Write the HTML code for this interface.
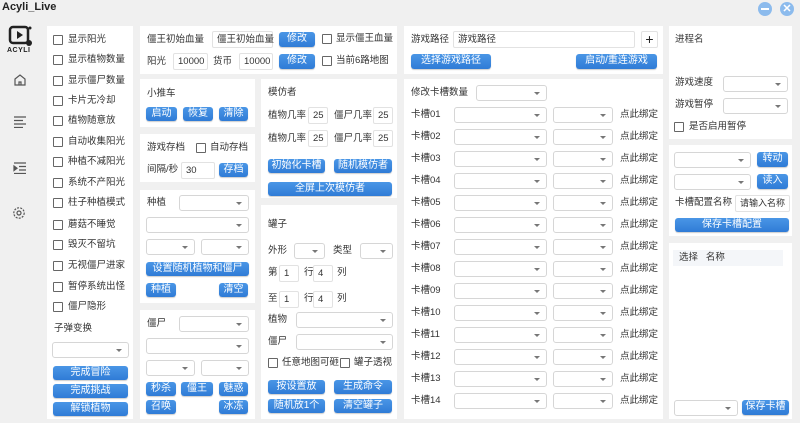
<!DOCTYPE html>
<html><head><meta charset="utf-8"><style>
*{box-sizing:border-box;margin:0;padding:0}
body{width:800px;height:423px;background:#f0f0f0;position:relative;overflow:hidden;font-family:"Liberation Sans","Noto Sans CJK SC",sans-serif;font-size:9.5px;color:#333}
div,span{position:absolute}
.p{background:#fff}
.t{white-space:nowrap;line-height:12px}
.b{background:linear-gradient(#4a96e6,#2f7bd6);color:#fff;border-radius:3px;text-align:center;font-size:10px;line-height:14px;height:14px;box-shadow:0 1px 1px rgba(0,0,0,.2)}
.s{background:#fff;border:1px solid #d6d6d6;border-radius:3px;height:16px}
.s:after{content:"";position:absolute;right:6px;top:6px;border-left:3px solid transparent;border-right:3px solid transparent;border-top:3px solid #777}
.i{background:#fff;border:1px solid #e2e2e2;border-radius:2px;height:17px;line-height:15px;padding-left:4px;white-space:nowrap}
.c{width:10px;height:10px;border:1px solid #666;background:#fff;border-radius:1px}
</style></head><body>
<div class="t" style="left:2px;top:1px;font-weight:bold;font-size:11px;color:#222">Acyli_Live</div>
<div style="left:758px;top:2px;width:14px;height:14px;border-radius:50%;background:#8cbbed"><div style="left:3px;top:6px;width:8px;height:2px;background:#fff"></div></div>
<div style="left:780px;top:2px;width:14px;height:14px;border-radius:50%;background:#8cbbed;color:#fff;font-size:11px;line-height:14px;text-align:center;font-weight:bold">✕</div>
<!-- sidebar -->
<svg style="position:absolute;left:8px;top:25px" width="26" height="22" viewBox="0 0 26 22"><rect x="2" y="2" width="18" height="16" rx="3" fill="none" stroke="#222" stroke-width="2.5"/><path d="M9 6 L15 10 L9 14Z" fill="#222"/><circle cx="21" cy="18" r="3" fill="#222"/><circle cx="22" cy="3" r="1.5" fill="#222"/></svg>
<div class="t" style="left:7px;top:45px;font-size:7px;font-weight:bold;color:#222;letter-spacing:.5px">ACYLI</div>
<svg style="position:absolute;left:13px;top:73px" width="14" height="14" viewBox="0 0 14 14" fill="none" stroke="#555" stroke-width="1.2"><path d="M2 6 L7 2 L12 6 V12 H2Z M6 12 V9 H8 V12"/></svg>
<svg style="position:absolute;left:13px;top:116px" width="14" height="12" viewBox="0 0 14 12" stroke="#555" stroke-width="1.2"><path d="M1 1H13M1 4.5H10M1 8H13M1 11.5H10"/></svg>
<svg style="position:absolute;left:13px;top:162px" width="14" height="12" viewBox="0 0 14 12" stroke="#555" stroke-width="1.2"><path d="M1 1H13M6 4.5H13M6 8H13M1 11.5H13"/><path d="M1 4 L4 6.2 L1 8.5Z" fill="#555"/></svg>
<svg style="position:absolute;left:12px;top:206px" width="14" height="14" viewBox="0 0 14 14" fill="none" stroke="#555" stroke-width="1.2"><circle cx="7" cy="7" r="2"/><circle cx="7" cy="7" r="5.2" stroke-dasharray="2 1.2"/></svg>

<!-- panel A -->
<div class="p" style="left:47px;top:26px;width:86px;height:393px"></div>
<div class="c" style="left:53px;top:35px"></div><div class="t" style="left:68px;top:34px">显示阳光</div>
<div class="c" style="left:53px;top:55px"></div><div class="t" style="left:68px;top:54px">显示植物数量</div>
<div class="c" style="left:53px;top:76px"></div><div class="t" style="left:68px;top:75px">显示僵尸数量</div>
<div class="c" style="left:53px;top:96px"></div><div class="t" style="left:68px;top:95px">卡片无冷却</div>
<div class="c" style="left:53px;top:116px"></div><div class="t" style="left:68px;top:115px">植物随意放</div>
<div class="c" style="left:53px;top:137px"></div><div class="t" style="left:68px;top:136px">自动收集阳光</div>
<div class="c" style="left:53px;top:157px"></div><div class="t" style="left:68px;top:156px">种植不减阳光</div>
<div class="c" style="left:53px;top:178px"></div><div class="t" style="left:68px;top:177px">系统不产阳光</div>
<div class="c" style="left:53px;top:198px"></div><div class="t" style="left:68px;top:197px">柱子种植模式</div>
<div class="c" style="left:53px;top:220px"></div><div class="t" style="left:68px;top:219px">蘑菇不睡觉</div>
<div class="c" style="left:53px;top:240px"></div><div class="t" style="left:68px;top:239px">毁灭不留坑</div>
<div class="c" style="left:53px;top:261px"></div><div class="t" style="left:68px;top:260px">无视僵尸进家</div>
<div class="c" style="left:53px;top:282px"></div><div class="t" style="left:68px;top:281px">暂停系统出怪</div>
<div class="c" style="left:53px;top:302px"></div><div class="t" style="left:68px;top:301px">僵尸隐形</div>
<div class="t" style="left:54px;top:323px">子弹变换</div>
<div class="s" style="left:52px;top:342px;width:77px"></div>
<div class="b" style="left:53px;top:366px;width:75px">完成冒险</div>
<div class="b" style="left:53px;top:384px;width:75px">完成挑战</div>
<div class="b" style="left:53px;top:402px;width:75px">解锁植物</div>

<!-- panel B -->
<div class="p" style="left:140px;top:26px;width:257px;height:48px"></div>
<div class="t" style="left:147px;top:34px">僵王初始血量</div>
<div class="i" style="left:212px;top:31px;width:61px">僵王初始血量</div>
<div class="b" style="left:279px;top:32px;width:36px;height:15px">修改</div>
<div class="c" style="left:322px;top:34px"></div><div class="t" style="left:336px;top:33px">显示僵王血量</div>
<div class="t" style="left:147px;top:56px">阳光</div>
<div class="i" style="left:173px;top:53px;width:35px">10000</div>
<div class="t" style="left:213px;top:56px">货币</div>
<div class="i" style="left:239px;top:53px;width:34px">10000</div>
<div class="b" style="left:279px;top:54px;width:36px;height:15px">修改</div>
<div class="c" style="left:322px;top:56px"></div><div class="t" style="left:336px;top:55px">当前6路地图</div>

<!-- C -->
<div class="p" style="left:140px;top:79px;width:115px;height:48px"></div>
<div class="t" style="left:147px;top:88px">小推车</div>
<div class="b" style="left:146px;top:107px;width:31px">启动</div>
<div class="b" style="left:183px;top:107px;width:30px">恢复</div>
<div class="b" style="left:219px;top:107px;width:29px">清除</div>
<!-- D -->
<div class="p" style="left:140px;top:134px;width:115px;height:48px"></div>
<div class="t" style="left:147px;top:142px">游戏存档</div>
<div class="c" style="left:196px;top:143px"></div><div class="t" style="left:210px;top:142px">自动存档</div>
<div class="t" style="left:147px;top:164px">间隔/秒</div>
<div class="i" style="left:181px;top:162px;width:34px">30</div>
<div class="b" style="left:219px;top:163px;width:29px">存档</div>
<!-- E -->
<div class="p" style="left:140px;top:190px;width:115px;height:113px"></div>
<div class="t" style="left:147px;top:197px">种植</div>
<div class="s" style="left:179px;top:195px;width:70px"></div>
<div class="s" style="left:146px;top:217px;width:103px"></div>
<div class="s" style="left:146px;top:239px;width:49px"></div>
<div class="s" style="left:201px;top:239px;width:48px"></div>
<div class="b" style="left:146px;top:262px;width:103px">设置随机植物和僵尸</div>
<div class="b" style="left:146px;top:283px;width:30px">种植</div>
<div class="b" style="left:219px;top:283px;width:29px">清空</div>
<!-- F -->
<div class="p" style="left:140px;top:310px;width:115px;height:109px"></div>
<div class="t" style="left:147px;top:318px">僵尸</div>
<div class="s" style="left:179px;top:316px;width:70px"></div>
<div class="s" style="left:146px;top:338px;width:103px"></div>
<div class="s" style="left:146px;top:360px;width:49px"></div>
<div class="s" style="left:201px;top:360px;width:48px"></div>
<div class="b" style="left:146px;top:382px;width:30px">秒杀</div>
<div class="b" style="left:181px;top:382px;width:32px">僵王</div>
<div class="b" style="left:219px;top:382px;width:29px">魅惑</div>
<div class="b" style="left:146px;top:400px;width:30px">召唤</div>
<div class="b" style="left:219px;top:400px;width:29px">冰冻</div>
<!-- G -->
<div class="p" style="left:261px;top:79px;width:136px;height:119px"></div>
<div class="t" style="left:268px;top:87px">模仿者</div>
<div class="t" style="left:268px;top:110px">植物几率</div>
<div class="i" style="left:308px;top:107px;width:20px">25</div>
<div class="t" style="left:334px;top:110px">僵尸几率</div>
<div class="i" style="left:373px;top:107px;width:20px">25</div>
<div class="t" style="left:268px;top:133px">植物几率</div>
<div class="i" style="left:308px;top:130px;width:20px">25</div>
<div class="t" style="left:334px;top:133px">僵尸几率</div>
<div class="i" style="left:373px;top:130px;width:20px">25</div>
<div class="b" style="left:268px;top:159px;width:57px">初始化卡槽</div>
<div class="b" style="left:334px;top:159px;width:58px">随机模仿者</div>
<div class="b" style="left:268px;top:182px;width:124px">全屏上次模仿者</div>
<!-- H -->
<div class="p" style="left:261px;top:205px;width:136px;height:214px"></div>
<div class="t" style="left:268px;top:219px">罐子</div>
<div class="t" style="left:268px;top:245px">外形</div>
<div class="s" style="left:294px;top:243px;width:31px"></div>
<div class="t" style="left:333px;top:245px">类型</div>
<div class="s" style="left:360px;top:243px;width:33px"></div>
<div class="t" style="left:268px;top:267px">第</div>
<div class="i" style="left:279px;top:265px;width:20px">1</div>
<div class="t" style="left:304px;top:267px">行</div>
<div class="i" style="left:313px;top:265px;width:20px">4</div>
<div class="t" style="left:337px;top:267px">列</div>
<div class="t" style="left:268px;top:293px">至</div>
<div class="i" style="left:279px;top:291px;width:20px">1</div>
<div class="t" style="left:304px;top:293px">行</div>
<div class="i" style="left:313px;top:291px;width:20px">4</div>
<div class="t" style="left:337px;top:293px">列</div>
<div class="t" style="left:268px;top:314px">植物</div>
<div class="s" style="left:296px;top:312px;width:97px"></div>
<div class="t" style="left:268px;top:336px">僵尸</div>
<div class="s" style="left:296px;top:334px;width:97px"></div>
<div class="c" style="left:268px;top:358px"></div><div class="t" style="left:282px;top:357px">任意地图可砸</div>
<div class="c" style="left:340px;top:358px"></div><div class="t" style="left:354px;top:357px">罐子透视</div>
<div class="b" style="left:268px;top:380px;width:57px">按设置放</div>
<div class="b" style="left:334px;top:380px;width:58px">生成命令</div>
<div class="b" style="left:268px;top:399px;width:57px">随机放1个</div>
<div class="b" style="left:334px;top:399px;width:58px">清空罐子</div>

<!-- I -->
<div class="p" style="left:404px;top:26px;width:259px;height:48px"></div>
<div class="t" style="left:411px;top:34px">游戏路径</div>
<div class="i" style="left:453px;top:31px;width:182px">游戏路径</div>
<div class="i" style="left:641px;top:31px;width:17px;padding:0;text-align:center;font-size:14px;line-height:14px;color:#222">+</div>
<div class="b" style="left:411px;top:54px;width:80px;height:15px">选择游戏路径</div>
<div class="b" style="left:576px;top:54px;width:81px;height:15px">启动/重连游戏</div>
<!-- J -->
<div class="p" style="left:404px;top:79px;width:259px;height:340px"></div>
<div class="t" style="left:411px;top:87px">修改卡槽数量</div>
<div class="s" style="left:476px;top:85px;width:71px"></div>
<div class="t" style="left:411px;top:109px">卡槽01</div><div class="s" style="left:454px;top:107px;width:93px"></div><div class="s" style="left:553px;top:107px;width:60px"></div><div class="t" style="left:620px;top:109px">点此绑定</div>
<div class="t" style="left:411px;top:131px">卡槽02</div><div class="s" style="left:454px;top:129px;width:93px"></div><div class="s" style="left:553px;top:129px;width:60px"></div><div class="t" style="left:620px;top:131px">点此绑定</div>
<div class="t" style="left:411px;top:153px">卡槽03</div><div class="s" style="left:454px;top:151px;width:93px"></div><div class="s" style="left:553px;top:151px;width:60px"></div><div class="t" style="left:620px;top:153px">点此绑定</div>
<div class="t" style="left:411px;top:175px">卡槽04</div><div class="s" style="left:454px;top:173px;width:93px"></div><div class="s" style="left:553px;top:173px;width:60px"></div><div class="t" style="left:620px;top:175px">点此绑定</div>
<div class="t" style="left:411px;top:197px">卡槽05</div><div class="s" style="left:454px;top:195px;width:93px"></div><div class="s" style="left:553px;top:195px;width:60px"></div><div class="t" style="left:620px;top:197px">点此绑定</div>
<div class="t" style="left:411px;top:219px">卡槽06</div><div class="s" style="left:454px;top:217px;width:93px"></div><div class="s" style="left:553px;top:217px;width:60px"></div><div class="t" style="left:620px;top:219px">点此绑定</div>
<div class="t" style="left:411px;top:241px">卡槽07</div><div class="s" style="left:454px;top:239px;width:93px"></div><div class="s" style="left:553px;top:239px;width:60px"></div><div class="t" style="left:620px;top:241px">点此绑定</div>
<div class="t" style="left:411px;top:263px">卡槽08</div><div class="s" style="left:454px;top:261px;width:93px"></div><div class="s" style="left:553px;top:261px;width:60px"></div><div class="t" style="left:620px;top:263px">点此绑定</div>
<div class="t" style="left:411px;top:285px">卡槽09</div><div class="s" style="left:454px;top:283px;width:93px"></div><div class="s" style="left:553px;top:283px;width:60px"></div><div class="t" style="left:620px;top:285px">点此绑定</div>
<div class="t" style="left:411px;top:307px">卡槽10</div><div class="s" style="left:454px;top:305px;width:93px"></div><div class="s" style="left:553px;top:305px;width:60px"></div><div class="t" style="left:620px;top:307px">点此绑定</div>
<div class="t" style="left:411px;top:329px">卡槽11</div><div class="s" style="left:454px;top:327px;width:93px"></div><div class="s" style="left:553px;top:327px;width:60px"></div><div class="t" style="left:620px;top:329px">点此绑定</div>
<div class="t" style="left:411px;top:351px">卡槽12</div><div class="s" style="left:454px;top:349px;width:93px"></div><div class="s" style="left:553px;top:349px;width:60px"></div><div class="t" style="left:620px;top:351px">点此绑定</div>
<div class="t" style="left:411px;top:373px">卡槽13</div><div class="s" style="left:454px;top:371px;width:93px"></div><div class="s" style="left:553px;top:371px;width:60px"></div><div class="t" style="left:620px;top:373px">点此绑定</div>
<div class="t" style="left:411px;top:395px">卡槽14</div><div class="s" style="left:454px;top:393px;width:93px"></div><div class="s" style="left:553px;top:393px;width:60px"></div><div class="t" style="left:620px;top:395px">点此绑定</div>

<!-- K -->
<div class="p" style="left:669px;top:26px;width:123px;height:113px"></div>
<div class="t" style="left:675px;top:34px">进程名</div>
<div class="t" style="left:675px;top:77px">游戏速度</div>
<div class="s" style="left:723px;top:76px;width:65px"></div>
<div class="t" style="left:675px;top:99px">游戏暂停</div>
<div class="s" style="left:723px;top:98px;width:65px"></div>
<div class="c" style="left:674px;top:122px"></div><div class="t" style="left:689px;top:121px">是否启用暂停</div>
<!-- L -->
<div class="p" style="left:669px;top:145px;width:123px;height:91px"></div>
<div class="s" style="left:674px;top:152px;width:77px"></div>
<div class="b" style="left:757px;top:152px;width:31px;height:15px">转动</div>
<div class="s" style="left:674px;top:174px;width:77px"></div>
<div class="b" style="left:757px;top:174px;width:31px;height:15px">读入</div>
<div class="t" style="left:675px;top:197px">卡槽配置名称</div>
<div class="i" style="left:735px;top:195px;width:55px;font-size:9px">请输入名称</div>
<div class="b" style="left:675px;top:218px;width:114px">保存卡槽配置</div>
<!-- M -->
<div class="p" style="left:669px;top:243px;width:123px;height:176px"></div>
<div style="left:673px;top:250px;width:110px;height:16px;background:#f4f6f9"></div>
<div class="t" style="left:679px;top:252px">选择&nbsp;&nbsp;&nbsp;名称</div>
<div class="s" style="left:674px;top:400px;width:64px"></div>
<div class="b" style="left:742px;top:400px;width:47px;height:15px">保存卡槽</div>
</body></html>
